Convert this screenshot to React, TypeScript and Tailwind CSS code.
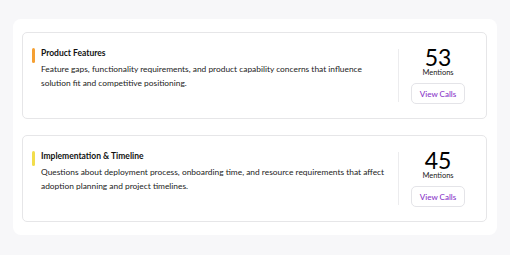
import React from 'react';

interface Topic {
  title: string;
  description: string;
  mentions: number;
  accent: string;
}

const topics: Topic[] = [
  {
    title: 'Product Features',
    description:
      'Feature gaps, functionality requirements, and product capability concerns that influence solution fit and competitive positioning.',
    mentions: 53,
    accent: 'bg-[#f5a033]',
  },
  {
    title: 'Implementation & Timeline',
    description:
      'Questions about deployment process, onboarding time, and resource requirements that affect adoption planning and project timelines.',
    mentions: 45,
    accent: 'bg-[#f2dd4c]',
  },
];

const TopicCard: React.FC<{ topic: Topic }> = ({ topic }) => (
  <div className="flex h-[87px] rounded-[5px] border border-[#e6e6e8] bg-white pl-[9px] pr-[21px] py-4">
    <div className="flex flex-1 gap-[6px]">
      <div className={`-mt-[1px] h-[15px] w-[3px] shrink-0 rounded-full ${topic.accent}`} />
      <div className="pr-2">
        <h3 className="-mt-[2px] text-[8.5px] font-bold leading-[12px] text-[#111]">{topic.title}</h3>
        <p className="mt-[3px] text-[8.4px] leading-[14px] text-[#222]">{topic.description}</p>
      </div>
    </div>
    <div className="flex w-[67px] flex-col items-end border-l border-[#ececee]">
      <div className="flex w-[54px] flex-col items-center">
        <span className="-mt-[2px] text-[23px] leading-[21px] text-black">{topic.mentions}</span>
        <span className="text-[7.5px] leading-[9px] text-[#222]">Mentions</span>
        <button className="mt-[6px] h-[21px] w-[54px] rounded-[5px] border border-[#e4e4e8] bg-white text-[8px] font-medium text-[#8a35c9]">
          View Calls
        </button>
      </div>
    </div>
  </div>
);

export default function App() {
  return (
    <div
      className="min-h-[255px] bg-[#f7f7f9] pl-[13px] pr-[13px] pt-[19px]"
      style={{ fontFamily: 'Lato, "Liberation Sans", sans-serif' }}
    >
      <div className="flex flex-col gap-4 rounded-lg bg-white pb-[13px] pl-[9px] pr-[10px] pt-[13px]">
        {topics.map((t) => (
          <TopicCard key={t.title} topic={t} />
        ))}
      </div>
    </div>
  );
}
